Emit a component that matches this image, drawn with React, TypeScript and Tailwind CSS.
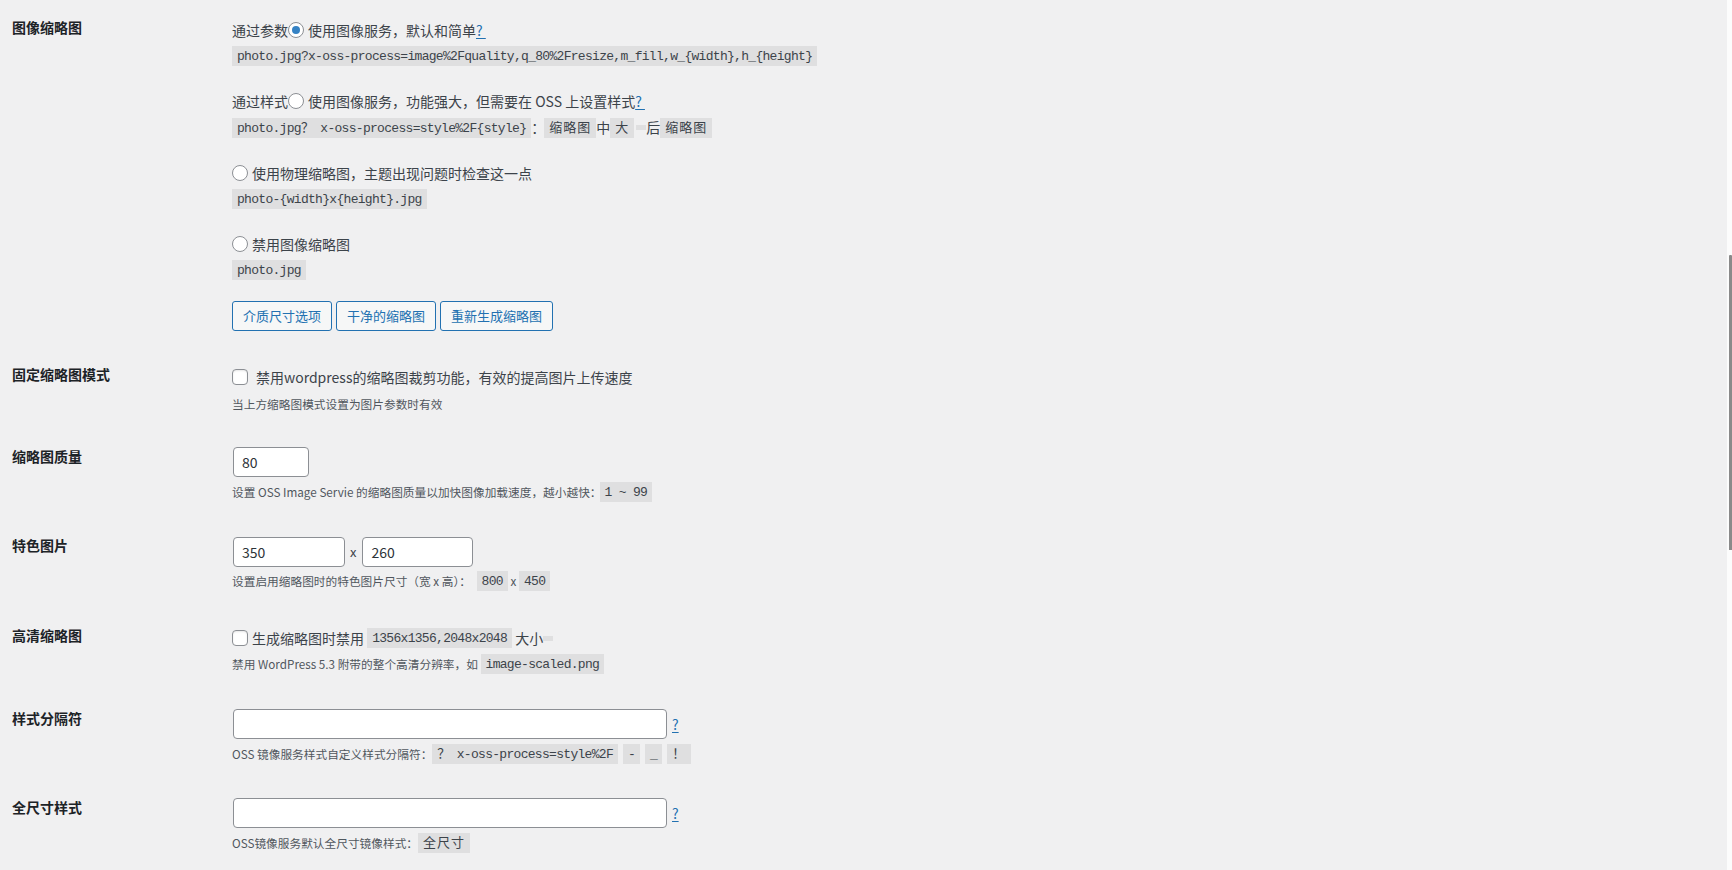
import React from 'react';

const mono = "font-['Liberation_Mono','Noto_Sans_CJK_SC',monospace]";

const Code: React.FC<{ children?: React.ReactNode; cjk?: boolean; className?: string }> = ({ children, cjk, className = '' }) => (
  <code
    className={`inline-block shrink-0 bg-black/[0.07] px-[5px] pt-[3px] pb-[2px] text-[13px] leading-[15px] text-[#3c434a] whitespace-pre ${mono} ${
      cjk ? 'tracking-[1px]' : 'tracking-[-0.7px]'
    } ${className}`}
  >
    {children}
  </code>
);

const Radio: React.FC<{ checked?: boolean }> = ({ checked }) => (
  <span className="mr-1 inline-flex h-4 w-4 shrink-0 items-center justify-center rounded-full border border-[#8c8f94] bg-white">
    {checked && <span className="h-2 w-2 rounded-full bg-[#3582c4]" />}
  </span>
);

const Checkbox: React.FC<{ className?: string }> = ({ className = '' }) => (
  <span
    className={`inline-block h-4 w-4 shrink-0 rounded-[4px] border border-[#8c8f94] bg-white shadow-[inset_0_1px_2px_rgba(0,0,0,0.1)] ${className}`}
  />
);

const Help: React.FC<{ text?: string }> = ({ text = '?' }) => (
  <a href="#" className="text-[14px] text-[#2271b1] underline underline-offset-2">
    {text}
  </a>
);

const TextInput: React.FC<{ value?: string; className?: string }> = ({ value = '', className = '' }) => (
  <input
    readOnly
    value={value}
    className={`ml-[1px] h-[30px] shrink-0 rounded-[4px] border border-[#8c8f94] bg-white px-2 text-[14px] text-[#2c3338] outline-none ${className}`}
  />
);

const Button: React.FC<{ children: React.ReactNode }> = ({ children }) => (
  <button className="h-[30px] rounded-[3px] border border-[#2271b1] bg-[#f6f7f7] px-[10px] text-[13px] text-[#2271b1]">
    {children}
  </button>
);

interface RowProps {
  label: string;
  labelPad: string;
  contentPad: string;
  children: React.ReactNode;
}

const Row: React.FC<RowProps> = ({ label, labelPad, contentPad, children }) => (
  <div className="flex">
    <div className={`w-[232px] shrink-0 pl-3 text-[14px] font-semibold leading-[1.3] text-[#1d2327] ${labelPad}`}>{label}</div>
    <div className={`min-w-0 flex-1 text-[14px] text-[#3c434a] ${contentPad}`}>{children}</div>
  </div>
);

const Desc: React.FC<{ children: React.ReactNode; className?: string }> = ({ children, className = '' }) => (
  <div className={`flex h-5 items-center whitespace-pre text-[11.7px] text-[#50575e] ${className}`}>{children}</div>
);

export default function App() {
  return (
    <div className="flex h-[870px] overflow-hidden bg-[#f0f0f1] font-['Noto_Sans_CJK_SC','Noto_Sans',sans-serif]">
      <main className="min-w-0 flex-1">
        <Row label="图像缩略图" labelPad="pt-[18px]" contentPad="pt-[19px]">
          <div className="flex h-[22px] items-center whitespace-pre">
            通过参数<Radio checked />使用图像服务，默认和简单<Help text={'?\u00a0'} />
          </div>
          <div className="mt-[5px] flex">
            <Code>photo.jpg?x-oss-process=image%2Fquality,q_80%2Fresize,m_fill,w_{'{width}'},h_{'{height}'}</Code>
          </div>

          <div className="mt-6 flex h-[22px] items-center whitespace-pre">
            通过样式<Radio />使用图像服务，功能强大，但需要在 OSS 上设置样式<Help text={'?\u00a0'} />
          </div>
          <div className="mt-[5px] flex items-center">
            <Code>photo.jpg？ x-oss-process=style%2F{'{style}'}</Code>
            <span className="w-[13px]">：</span>
            <Code cjk>缩略图</Code>
            <span>中</span>
            <Code cjk>大</Code>
            <Code className="ml-[2px]"></Code>
            <span>后</span>
            <Code cjk>缩略图</Code>
          </div>

          <div className="mt-6 flex h-[22px] items-center">
            <Radio />使用物理缩略图，主题出现问题时检查这一点
          </div>
          <div className="mt-[5px] flex">
            <Code>photo-{'{width}'}x{'{height}'}.jpg</Code>
          </div>

          <div className="mt-6 flex h-[22px] items-center">
            <Radio />禁用图像缩略图
          </div>
          <div className="mt-[5px] flex">
            <Code>photo.jpg</Code>
          </div>

          <div className="mt-[21px] flex gap-1">
            <Button>介质尺寸选项</Button>
            <Button>干净的缩略图</Button>
            <Button>重新生成缩略图</Button>
          </div>
        </Row>

        <Row label="固定缩略图模式" labelPad="pt-[34px]" contentPad="pt-[35px]">
          <div className="flex h-[22px] items-center">
            <Checkbox className="mr-2" />禁用wordpress的缩略图裁剪功能，有效的提高图片上传速度
          </div>
          <Desc className="mt-[6px]">当上方缩略图模式设置为图片参数时有效</Desc>
        </Row>

        <Row label="缩略图质量" labelPad="pt-[33px]" contentPad="pt-[33px]">
          <div className="flex">
            <TextInput value="80" className="w-[76px]" />
          </div>
          <Desc className="mt-[5px]">
            设置 OSS Image Servie 的缩略图质量以加快图像加载速度，越小越快：<Code className="-ml-[2px]">1 ~ 99</Code>
          </Desc>
        </Row>

        <Row label="特色图片" labelPad="pt-[34px]" contentPad="pt-[35px]">
          <div className="flex items-center">
            <TextInput value="350" className="w-[112px]" />
            <span className="mx-[5px] text-[13px]">x</span>
            <TextInput value="260" className="w-[111px]" />
          </div>
          <Desc className="mt-1">
            设置启用缩略图时的特色图片尺寸（宽 x 高）： <Code className="ml-[3px]">800</Code> x <Code>450</Code>
          </Desc>
        </Row>

        <Row label="高清缩略图" labelPad="pt-[35px]" contentPad="pt-9">
          <div className="flex h-[22px] items-center whitespace-pre">
            <Checkbox className="mr-1" />生成缩略图时禁用 <Code>1356x1356,2048x2048</Code> 大小<Code></Code>
          </div>
          <Desc className="mt-[5px]">
            禁用 WordPress 5.3 附带的整个高清分辨率，如 <Code>image-scaled.png</Code>
          </Desc>
        </Row>

        <Row label="样式分隔符" labelPad="pt-[35px]" contentPad="pt-[35px]">
          <div className="flex items-center gap-[5px]">
            <TextInput className="w-[434px]" />
            <Help />
          </div>
          <Desc className="mt-[5px]">
            OSS 镜像服务样式自定义样式分隔符：<Code>？ x-oss-process=style%2F</Code>
            <Code className="ml-[5px]">-</Code>
            <Code className="ml-[5px]">_</Code>
            <Code cjk className="ml-[5px]">！</Code>
          </Desc>
        </Row>

        <Row label="全尺寸样式" labelPad="pt-[34px]" contentPad="pt-[34px]">
          <div className="flex items-center gap-[5px]">
            <TextInput className="w-[434px]" />
            <Help />
          </div>
          <Desc className="mt-[5px]">
            OSS镜像服务默认全尺寸镜像样式：<Code cjk>全尺寸</Code>
          </Desc>
        </Row>
      </main>

      <div className="flex w-[5px] shrink-0 justify-end bg-[#fcfcfc]">
        <div className="mt-[255px] h-[295px] w-[3px] rounded-t-[1px] bg-[#8a8a8a]" />
      </div>
    </div>
  );
}
